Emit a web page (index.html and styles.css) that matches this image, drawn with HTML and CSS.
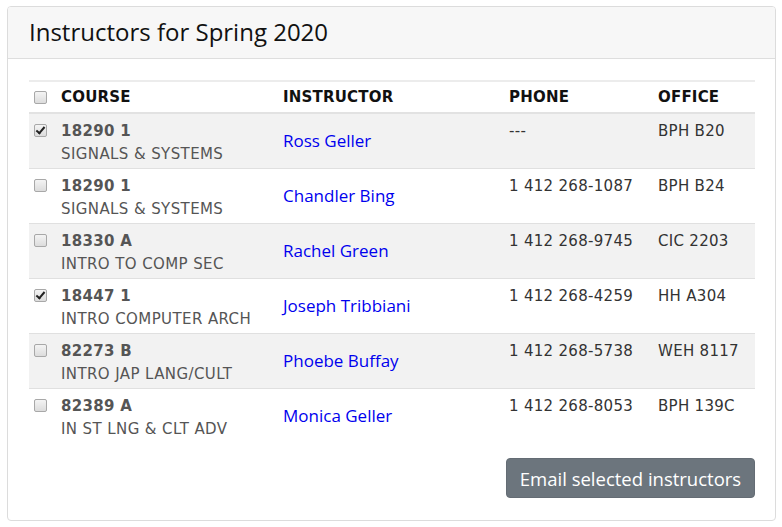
FILE: index.html
```html
<!DOCTYPE html>
<html>
<head>
<meta charset="utf-8">
<link rel="stylesheet" href="styles.css">
</head>
<body>
<div class="card">
  <div class="card-header">Instructors for Spring 2020</div>
  <div class="card-body">
    <table class="tbl">
      <colgroup>
        <col class="c-cb"><col class="c-course"><col class="c-inst"><col class="c-phone"><col class="c-office">
      </colgroup>
      <thead>
        <tr>
          <th class="cb"><input type="checkbox" class="chk"></th>
          <th>COURSE</th>
          <th>INSTRUCTOR</th>
          <th>PHONE</th>
          <th>OFFICE</th>
        </tr>
      </thead>
      <tbody>
        <tr class="alt">
          <td class="cb"><input type="checkbox" class="chk" checked></td>
          <td><div class="code">18290 1</div><div class="desc">SIGNALS &amp; SYSTEMS</div></td>
          <td class="name"><a href="#">Ross Geller</a></td>
          <td class="plain">---</td>
          <td class="plain">BPH B20</td>
        </tr>
        <tr>
          <td class="cb"><input type="checkbox" class="chk"></td>
          <td><div class="code">18290 1</div><div class="desc">SIGNALS &amp; SYSTEMS</div></td>
          <td class="name"><a href="#">Chandler Bing</a></td>
          <td class="plain">1 412 268-1087</td>
          <td class="plain">BPH B24</td>
        </tr>
        <tr class="alt">
          <td class="cb"><input type="checkbox" class="chk"></td>
          <td><div class="code">18330 A</div><div class="desc">INTRO TO COMP SEC</div></td>
          <td class="name"><a href="#">Rachel Green</a></td>
          <td class="plain">1 412 268-9745</td>
          <td class="plain">CIC 2203</td>
        </tr>
        <tr>
          <td class="cb"><input type="checkbox" class="chk" checked></td>
          <td><div class="code">18447 1</div><div class="desc">INTRO COMPUTER ARCH</div></td>
          <td class="name"><a href="#">Joseph Tribbiani</a></td>
          <td class="plain">1 412 268-4259</td>
          <td class="plain">HH A304</td>
        </tr>
        <tr class="alt">
          <td class="cb"><input type="checkbox" class="chk"></td>
          <td><div class="code">82273 B</div><div class="desc">INTRO JAP LANG/CULT</div></td>
          <td class="name"><a href="#">Phoebe Buffay</a></td>
          <td class="plain">1 412 268-5738</td>
          <td class="plain">WEH 8117</td>
        </tr>
        <tr class="last">
          <td class="cb"><input type="checkbox" class="chk"></td>
          <td><div class="code">82389 A</div><div class="desc">IN ST LNG &amp; CLT ADV</div></td>
          <td class="name"><a href="#">Monica Geller</a></td>
          <td class="plain">1 412 268-8053</td>
          <td class="plain">BPH 139C</td>
        </tr>
      </tbody>
    </table>
    <div class="actions">
      <button class="btn">Email selected instructors</button>
    </div>
  </div>
</div>
</body>
</html>
```

FILE: styles.css
```css
html, body {
  margin: 0;
  padding: 0;
  background: #ffffff;
}
body {
  padding: 6px 6px 0 7px;
}
.card {
  width: 769px;
  height: 515px;
  border: 1px solid #dcdcdc;
  border-radius: 4px;
  box-sizing: border-box;
  overflow: hidden;
}
.card-header {
  height: 52px;
  background: #f7f7f7;
  border-bottom: 1px solid #dedede;
  padding: 0 21px 2px 21px;
  display: flex;
  align-items: center;
  font-family: "Open Sans", sans-serif;
  font-size: 24px;
  color: #111;
  box-sizing: border-box;
}
.card-body {
  padding: 21px 20px 0 21px;
}
.tbl {
  width: 726px;
  border-collapse: collapse;
  table-layout: fixed;
  font-family: "DejaVu Sans", Verdana, sans-serif;
}
.c-cb { width: 26px; }
.c-course { width: 222px; }
.c-inst { width: 226px; }
.c-phone { width: 149px; }
.c-office { width: 103px; }
.tbl thead tr {
  border-top: 2px solid #ececec;
  border-bottom: 2px solid #e2e2e2;
}
.tbl th {
  height: 30px;
  text-align: left;
  font-size: 15px;
  font-weight: bold;
  color: #111;
  padding: 0 6px;
  vertical-align: middle;
  letter-spacing: 0.2px;
}
.tbl td {
  height: 55px;
  padding: 6px 6px 0 6px;
  vertical-align: top;
  box-sizing: border-box;
}
.tbl tbody tr {
  border-bottom: 1px solid #e0e0e0;
}
.tbl tbody tr.last {
  border-bottom: none;
}
.tbl tbody tr.alt {
  background: #f2f2f2;
}
.tbl .cb {
  padding-left: 5px;
  padding-right: 0;
}
.tbl td.cb {
  padding-top: 10px;
}
.code {
  font-size: 15px;
  font-weight: bold;
  color: #555;
  line-height: 23px;
  letter-spacing: 0.3px;
}
.desc {
  font-size: 15px;
  color: #555;
  line-height: 23px;
  letter-spacing: 0.4px;
}
.plain {
  font-size: 15px;
  color: #333;
  line-height: 23px;
  letter-spacing: 0.3px;
}
.tbl td.name {
  vertical-align: middle;
  padding-top: 0;
}
.name a {
  font-family: "Open Sans", sans-serif;
  font-size: 17px;
  color: #0000ee;
  text-decoration: none;
}
.chk {
  appearance: none;
  -webkit-appearance: none;
  margin: 0;
  width: 13px;
  height: 13px;
  border: 1px solid #a8a8a8;
  border-radius: 2px;
  background: linear-gradient(#f4f4f4, #dcdcdc);
  box-sizing: border-box;
  display: block;
  position: relative;
}
.chk:checked::after {
  content: "";
  position: absolute;
  left: 3px;
  top: 0px;
  width: 3px;
  height: 7px;
  border-right: 2px solid #222;
  border-bottom: 2px solid #222;
  transform: rotate(40deg);
}
.actions {
  display: flex;
  justify-content: flex-end;
  margin-top: 15px;
}
.btn {
  width: 249px;
  height: 40px;
  background: #6c757d;
  border: 1px solid #646c74;
  border-radius: 4px;
  color: #ffffff;
  font-family: "Open Sans", sans-serif;
  font-size: 18.5px;
  padding: 0;
  margin-right: 0;
}
```
